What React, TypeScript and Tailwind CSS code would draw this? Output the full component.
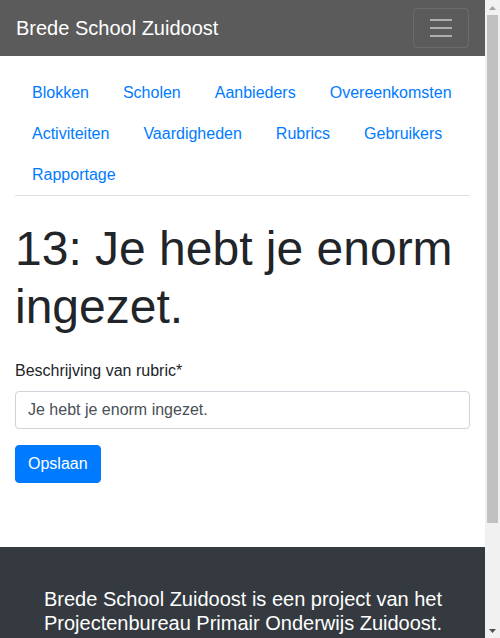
const links = [
  "Blokken",
  "Scholen",
  "Aanbieders",
  "Overeenkomsten",
  "Activiteiten",
  "Vaardigheden",
  "Rubrics",
  "Gebruikers",
  "Rapportage",
];

function Scrollbar() {
  return (
    <div className="w-[15px] h-[638px] shrink-0 bg-[#f1f1f1] flex flex-col">
      <div className="h-[15px] flex items-center justify-center">
        <svg width="7" height="4" viewBox="0 0 7 4">
          <path d="M3.5 0L7 4H0z" fill="#a3a3a3" />
        </svg>
      </div>
      <div className="mx-[2px] h-[508px] bg-[#c1c1c1]" />
      <div className="flex-1" />
      <div className="h-[15px] flex items-center justify-center">
        <svg width="7" height="4" viewBox="0 0 7 4">
          <path d="M0 0h7L3.5 4z" fill="#505050" />
        </svg>
      </div>
    </div>
  );
}

export default function App() {
  return (
    <div className="flex items-start bg-white font-['Liberation_Sans',Arial,sans-serif] text-[#212529]">
      <div className="w-[485px] min-h-[765px] flex flex-col">
        {/* Navbar */}
        <nav className="h-14 bg-[#5b5b5b] flex items-center justify-between px-4">
          <a className="text-xl leading-[30px] text-white">Brede School Zuidoost</a>
          <button className="w-[56px] h-[40px] border border-white/10 rounded flex items-center justify-center">
            <svg width="30" height="30" viewBox="0 0 30 30">
              <path
                d="M4 7h22M4 15h22M4 23h22"
                stroke="rgba(255,255,255,0.5)"
                strokeWidth="2"
                strokeMiterlimit="10"
              />
            </svg>
          </button>
        </nav>

        {/* Main */}
        <main className="flex-1 px-[15px]">
          <ul className="mt-[17px] pl-[1px] flex flex-wrap gap-x-[2px] gap-y-[1px] border-b border-[#dee2e6]">
            {links.map((l) => (
              <li key={l}>
                <a className="block px-4 py-2 leading-6 text-base text-[#007bff]">{l}</a>
              </li>
            ))}
          </ul>

          <h1 className="mt-6 mb-6 text-[48px] leading-[1.2] font-normal">13: Je hebt je enorm ingezet.</h1>

          <form>
            <div className="mb-4">
              <label className="block mb-2 text-base leading-6">Beschrijving van rubric*</label>
              <input
                type="text"
                defaultValue="Je hebt je enorm ingezet."
                className="block w-full h-[38px] px-3 border border-[#ced4da] rounded text-base text-[#495057] bg-white outline-none"
              />
            </div>
            <button
              type="button"
              className="h-[38px] px-3 bg-[#007bff] text-white text-base leading-6 rounded border border-[#007bff]"
            >
              Opslaan
            </button>
          </form>
        </main>

        {/* Footer */}
        <footer className="mt-16 bg-[#343a40] text-white pl-[44px] pr-[30px] pt-10 pb-[130px]">
          <p className="text-xl leading-6">
            Brede School Zuidoost is een project van het Projectenbureau Primair Onderwijs Zuidoost.
          </p>
        </footer>
      </div>
      <Scrollbar />
    </div>
  );
}
